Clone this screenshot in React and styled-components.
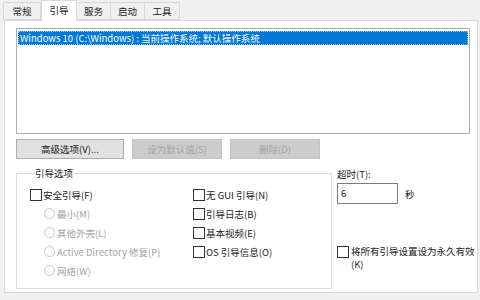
import React from "react";
import styled, { createGlobalStyle } from "styled-components";

const GlobalStyle = createGlobalStyle`
  html, body {
    margin: 0;
    padding: 0;
    background: #f0f0f0;
    font-family: "Noto Sans CJK SC", "Noto Sans", sans-serif;
    font-size: 9px;
    color: #1a1a1a;
  }
`;

const Window = styled.div`
  width: 480px;
  height: 300px;
  background: #f0f0f0;
  overflow: hidden;
`;

const TabRow = styled.div`
  display: flex;
  padding: 2px 0 0 3px;
  height: 18px;
  position: relative;
  z-index: 1;
`;

const Tab = styled.div`
  box-sizing: border-box;
  width: ${(p) => p.$w}px;
  height: ${(p) => (p.$active ? 21 : 18)}px;
  margin-top: ${(p) => (p.$active ? -2 : 0)}px;
  background: ${(p) => (p.$active ? "#ffffff" : "#f0f0f0")};
  border: 1px solid #d9d9d9;
  border-bottom: ${(p) => (p.$active ? "none" : "1px solid #d9d9d9")};
  border-left: ${(p) => (p.$first || p.$active ? "1px solid #d9d9d9" : "none")};
  display: flex;
  align-items: center;
  justify-content: center;
  font-size: 9.5px;
  line-height: 1;
  padding-top: ${(p) => (p.$active ? 0 : 1)}px;
`;

const Panel = styled.div`
  box-sizing: border-box;
  margin: 0 2px 0 4px;
  height: 273px;
  background: #ffffff;
  border: 1px solid #d9d9d9;
  padding: 7px 0 0 11px;
  display: flex;
  flex-direction: column;
`;

const ListBox = styled.div`
  box-sizing: border-box;
  width: 454px;
  height: 106px;
  border: 1px solid #adadad;
  padding: 2px 1px;
`;

const ListItem = styled.div`
  height: 14px;
  background: #0078d7;
  color: #fff;
  font-size: 9.5px;
  line-height: 14px;
  padding-left: 2px;
  white-space: nowrap;
  outline: 1px dotted #9bc6ef;
  outline-offset: -1px;
`;

const ButtonRow = styled.div`
  display: flex;
  gap: 8px;
  margin-top: 5px;
`;

const Button = styled.div`
  box-sizing: border-box;
  width: ${(p) => p.$w}px;
  height: 20px;
  display: flex;
  align-items: center;
  justify-content: center;
  font-size: 9.5px;
  background: ${(p) => (p.$disabled ? "#cccccc" : "#e1e1e1")};
  border: 1px solid ${(p) => (p.$disabled ? "#c4c4c4" : "#adadad")};
  color: ${(p) => (p.$disabled ? "#a3a3a3" : "#1a1a1a")};
`;

const Lower = styled.div`
  display: flex;
  margin-top: 8px;
`;

const Group = styled.fieldset`
  box-sizing: border-box;
  width: 322px;
  height: 122px;
  margin: 0;
  padding: 6px 0 0 13px;
  border: 1px solid #dcdcdc;
  display: grid;
  grid-template-columns: 163px 1fr;
  grid-auto-rows: 19px;
  align-content: start;
`;

const Legend = styled.legend`
  padding: 0 1px;
  margin-left: 4px;
  font-size: 9.5px;
  line-height: 12px;
`;

const Option = styled.div`
  display: flex;
  align-items: center;
  gap: 1px;
  padding-left: ${(p) => (p.$indent ? 14 : 0)}px;
  color: ${(p) => (p.$disabled ? "#a3a3a3" : "#1a1a1a")};
  white-space: nowrap;
  font-size: 9.5px;
`;

const Box = styled.span`
  box-sizing: border-box;
  width: 12px;
  height: 12px;
  border: 1px solid #333333;
  background: #fff;
  flex: none;
`;

const Radio = styled.span`
  box-sizing: border-box;
  width: 11px;
  height: 11px;
  border: 1px solid #c6c6c6;
  border-radius: 50%;
  margin-right: 1px;
  flex: none;
`;

const Side = styled.div`
  display: flex;
  flex-direction: column;
  padding-left: 5px;
`;

const Label = styled.div`
  font-size: 9.5px;
  line-height: 14px;
`;

const TimeRow = styled.div`
  display: flex;
  align-items: center;
  gap: 7px;
  margin-top: 2px;
  font-size: 9.5px;
`;

const Input = styled.div`
  box-sizing: border-box;
  width: 61px;
  height: 21px;
  border: 1px solid #7a7a7a;
  padding: 3px 0 0 3px;
  font-size: 9.5px;
  line-height: 13px;
`;

const Permanent = styled.div`
  display: flex;
  align-items: flex-start;
  gap: 2px;
  margin-top: 41px;
  font-size: 9.5px;
  line-height: 13px;

  ${Box} {
    margin-top: 1px;
  }
`;

const PermanentText = styled.span`
  width: 126px;
`;

const tabs = [
  { label: "常规", w: 38 },
  { label: "引导", w: 36, active: true },
  { label: "服务", w: 34 },
  { label: "启动", w: 34 },
  { label: "工具", w: 35 },
];

export default function App() {
  return (
    <Window>
      <GlobalStyle />
      <TabRow>
        {tabs.map((t, i) => (
          <Tab key={t.label} $w={t.w} $active={t.active} $first={i === 0}>
            {t.label}
          </Tab>
        ))}
      </TabRow>
      <Panel>
        <ListBox>
          <ListItem>Windows 10 (C:\Windows) : 当前操作系统; 默认操作系统</ListItem>
        </ListBox>
        <ButtonRow>
          <Button $w={108}>高级选项(V)...</Button>
          <Button $w={90} $disabled>设为默认值(S)</Button>
          <Button $w={90} $disabled>删除(D)</Button>
        </ButtonRow>
        <Lower>
          <Group>
            <Legend>引导选项</Legend>
            <Option><Box />安全引导(F)</Option>
            <Option><Box />无 GUI 引导(N)</Option>
            <Option $indent $disabled><Radio />最小(M)</Option>
            <Option><Box />引导日志(B)</Option>
            <Option $indent $disabled><Radio />其他外壳(L)</Option>
            <Option><Box />基本视频(E)</Option>
            <Option $indent $disabled><Radio />Active Directory 修复(P)</Option>
            <Option><Box />OS 引导信息(O)</Option>
            <Option $indent $disabled><Radio />网络(W)</Option>
          </Group>
          <Side>
            <Label>超时(T):</Label>
            <TimeRow>
              <Input>6</Input>
              <span>秒</span>
            </TimeRow>
            <Permanent>
              <Box />
              <PermanentText>将所有引导设置设为永久有效(K)</PermanentText>
            </Permanent>
          </Side>
        </Lower>
      </Panel>
    </Window>
  );
}
